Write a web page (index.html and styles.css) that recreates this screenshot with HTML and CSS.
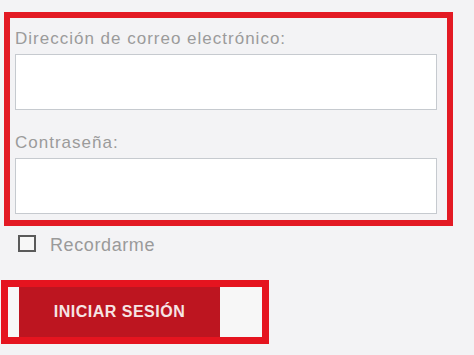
FILE: index.html
```html
<!DOCTYPE html>
<html lang="es">
<head>
<meta charset="utf-8">
<title>Iniciar sesión</title>
<link rel="stylesheet" href="styles.css">
</head>
<body>
  <form class="login">
    <div class="login-box">
      <label class="field-label" for="email">Dirección de correo electrónico:</label>
      <input class="field-input" id="email" type="text">
      <label class="field-label field-label--second" for="pass">Contraseña:</label>
      <input class="field-input" id="pass" type="password">
    </div>
    <label class="remember">
      <input class="remember-check" type="checkbox">
      <span class="remember-text">Recordarme</span>
    </label>
    <div class="btn-frame">
      <button class="btn-submit" type="button">INICIAR SESIÓN</button>
    </div>
  </form>
</body>
</html>
```

FILE: styles.css
```css
html, body {
  margin: 0;
  padding: 0;
}

body {
  background: #f3f3f5;
  font-family: "Liberation Sans", Arial, sans-serif;
  width: 474px;
  height: 355px;
  overflow: hidden;
}

.login {
  display: flex;
  flex-direction: column;
  align-items: flex-start;
  padding-top: 12px;
}

.login-box {
  box-sizing: border-box;
  width: 449px;
  margin-left: 4px;
  border: 6px solid #e31a24;
  padding: 11px 10px 6px 5px;
  display: flex;
  flex-direction: column;
}

.field-label {
  display: block;
  font-size: 17px;
  line-height: 20px;
  letter-spacing: 1px;
  color: #9b9b9b;
  margin-bottom: 5px;
}

.field-label--second {
  margin-top: 23px;
}

.field-input {
  box-sizing: border-box;
  display: block;
  width: 100%;
  height: 56px;
  margin: 0;
  border: 1px solid #c6cacf;
  background: #ffffff;
  outline: none;
}

.remember {
  display: flex;
  align-items: center;
  gap: 14px;
  margin-top: 9px;
  margin-left: 18px;
  height: 17px;
}

.remember-check {
  appearance: none;
  -webkit-appearance: none;
  box-sizing: border-box;
  width: 18px;
  height: 17px;
  margin: 0;
  border: 2px solid #5a5a5a;
  background: #f7f7f7;
}

.remember-text {
  font-size: 18px;
  line-height: 20px;
  letter-spacing: 0.6px;
  color: #9a9a9a;
  position: relative;
  top: 1px;
}

.btn-frame {
  display: flex;
  margin-top: 28px;
  margin-left: 1px;
  border: 7px solid #e5141f;
  background: #f7f7f7;
  padding: 0 42px 0 11px;
}

.btn-submit {
  width: 201px;
  height: 50px;
  margin: 0;
  border: none;
  background: #bd1520;
  color: #f6e4e4;
  font-family: "Liberation Sans", Arial, sans-serif;
  font-weight: bold;
  font-size: 16px;
  letter-spacing: 0.5px;
  padding: 0;
}
```
